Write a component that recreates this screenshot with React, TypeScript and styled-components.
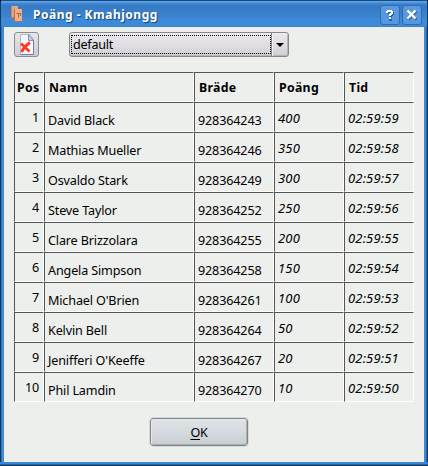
import React from "react";
import styled, { createGlobalStyle } from "styled-components";

const Global = createGlobalStyle`
  * { box-sizing: border-box; }
  body { margin: 0; background: #000; overflow: hidden; }
`;

const Window = styled.div`
  width: 428px;
  height: 466px;
  display: flex;
  flex-direction: column;
  font-family: "Noto Sans", sans-serif;
  font-size: 13px;
  color: #000;
  background: linear-gradient(90deg, #143c62 0 1px, #2c6eb0 1px 2px, #4493e2 2px 3px, #3c86d2 3px 425px, #3f8ad9 425px 426px, #2765a5 426px 427px, #123a60 427px);
  border-radius: 3px 3px 0 0;
  overflow: hidden;
`;

const TitleBar = styled.header`
  height: 27px;
  flex: none;
  margin: 0 1px;
  display: flex;
  align-items: center;
  padding: 2px 5px 0 10px;
  background: linear-gradient(#1a4a7a 0 1px, #5ca3ec 1px 2px, #4389d5 3px, #367bc4 6px, #3c82ce 17px, #3d8ad9 18px 26px, #3a83cf 26px);

  & > svg { flex: none; margin-top: -1px; }
`;

const Title = styled.h1`
  flex: 1;
  margin: 1px 0 0 10px;
  font: bold 12px/16px "Noto Sans", sans-serif;
  letter-spacing: 0.5px;
  color: #fff;
  text-shadow: 1px 1px 1px #174779;
`;

const TitleButton = styled.button`
  width: 20px;
  height: 20px;
  margin-left: 2px;
  padding: 0;
  display: grid;
  place-items: center;
  border: 1px solid #2d6cae;
  border-radius: 3px;
  background: linear-gradient(#5b9ade, #5797df);
`;

const Body = styled.main`
  flex: 1;
  margin: 0 4px;
  padding: 5px 10px 0;
  background: #edefec;
`;

const Toolbar = styled.div`
  height: 25px;
  display: flex;
  gap: 30px;
`;

const ToolButton = styled.button`
  width: 25px;
  height: 25px;
  padding: 0;
  display: grid;
  place-items: center;
  border: 1px solid #8a8d90;
  border-radius: 3px;
  background: linear-gradient(#e8e8ea, #cdced1);
`;

const Combo = styled.div`
  width: 220px;
  height: 25px;
  display: flex;
  border: 1px solid #85878a;
  border-radius: 3px;
  background: linear-gradient(#e9e7eb, #e1dfe3 50%, #cfced2);
  box-shadow: inset 0 1px #f1eff2, inset -1px -1px #b7b5ba;
`;

const ComboValue = styled.div`
  width: 200px;
  margin: 2px 0 2px 1px;
  padding-left: 1px;
  border: 1px dotted #000;
  font-size: 12.6px;
  letter-spacing: -0.25px;
  line-height: 18px;
`;

const ComboArrow = styled.div`
  width: 17px;
  display: grid;
  place-items: center;
  border-left: 1px solid #88868b;
  box-shadow: inset 1px 0 #f2f0f3;
`;

const Table = styled.table`
  width: 400px;
  margin-top: 15px;
  table-layout: fixed;
  border-collapse: separate;
  border-spacing: 0;
`;

const HeaderCell = styled.th<{ $w: number; $indent: number }>`
  width: ${(p) => p.$w}px;
  height: 30px;
  padding: 2px 0 0 ${(p) => p.$indent}px;
  border: 1px solid #fff;
  border-top-color: #555;
  border-left-color: #555;
  font-size: 12.3px;
  line-height: 26px;
  text-align: left;
  letter-spacing: 0.3px;
`;

const cellPadding = {
  rank: "3px 4px 0 0",
  plain: "8px 0 0 3px",
  italic: "3px 0 0 3px",
};

const Cell = styled.td<{ $kind: "rank" | "plain" | "italic" }>`
  height: 30px;
  padding: ${(p) => cellPadding[p.$kind]};
  border: 1px solid #fff;
  border-top-color: #555;
  border-left-color: #555;
  font-size: ${(p) => (p.$kind === "italic" ? 13 : 12.6)}px;
  font-style: ${(p) => (p.$kind === "italic" ? "italic" : "normal")};
  letter-spacing: ${(p) => (p.$kind === "italic" ? 0.15 : -0.15)}px;
  text-align: ${(p) => (p.$kind === "rank" ? "right" : "left")};
  vertical-align: top;
  line-height: ${(p) => (p.$kind === "plain" ? 20 : 24)}px;
  white-space: nowrap;
`;

const OkButton = styled.button`
  display: block;
  width: 98px;
  height: 28px;
  margin: 16px 0 0 136px;
  padding: 0;
  border: 1px solid #818588;
  border-radius: 3px;
  outline: 1px solid #d7dad9;
  outline-offset: 0;
  background: linear-gradient(#dfe4e7, #d4dadd 50%, #c8cdd0);
  box-shadow: inset -1px -1px #a9afb2, inset 1px 1px #e5eaec;
  font: 12.6px/25px "Noto Sans", sans-serif;
  letter-spacing: -0.3px;
  color: #000;
`;

const Mnemonic = styled.span`
  text-decoration: underline;
  text-underline-offset: 2px;
`;

const columns = [
  { name: "Pos", width: 30, indent: 2 },
  { name: "Namn", width: 150, indent: 4 },
  { name: "Bräde", width: 80, indent: 4 },
  { name: "Poäng", width: 70, indent: 4 },
  { name: "Tid", width: 70, indent: 4 },
];

const scores = [
  ["David Black", "928364243", "400", "02:59:59"],
  ["Mathias Mueller", "928364246", "350", "02:59:58"],
  ["Osvaldo Stark", "928364249", "300", "02:59:57"],
  ["Steve Taylor", "928364252", "250", "02:59:56"],
  ["Clare Brizzolara", "928364255", "200", "02:59:55"],
  ["Angela Simpson", "928364258", "150", "02:59:54"],
  ["Michael O'Brien", "928364261", "100", "02:59:53"],
  ["Kelvin Bell", "928364264", "50", "02:59:52"],
  ["Jenifferi O'Keeffe", "928364267", "20", "02:59:51"],
  ["Phil Lamdin", "928364270", "10", "02:59:50"],
];

const TilesIcon = () => (
  <svg width="12" height="16" viewBox="0 0 12 16">
    <path d="M0 0h7v12H0z" fill="#c98463" />
    <path d="M1 0h6v11H1z" fill="#e6a681" />
    <path d="M3 3h8v13H3z" fill="#b8704c" />
    <path d="M4 3h7v12H4z" fill="#efb18c" />
    <path d="M5.500 7.500h4M7.500 7.500v4M9.500 7v3" stroke="#9a6a55" fill="none" />
  </svg>
);

const HelpIcon = () => (
  <svg width="10" height="12" viewBox="0 0 10 12">
    <path d="M1 1h6v1h1v3H7v1H6v2H3V5h1V4h1V3H3v1H1zM3 9h3v2H3z" transform="translate(1 1)" fill="#28629f" />
    <path d="M2 1h5v1h1v3H7v1H6v1H4V5h1V4h1V3H3v1H1V2h1zM4 8h2v2H4z" fill="#fff" />
  </svg>
);

const CloseIcon = () => (
  <svg width="12" height="12" viewBox="0 0 12 12" fill="none" strokeWidth="2.4">
    <path d="M2.5 2.5l8 8m0-8l-8 8" stroke="#28629f" />
    <path d="M1.5 1.5l8 8m0-8l-8 8" stroke="#fff" />
  </svg>
);

const ResetIcon = () => (
  <svg width="19" height="21" viewBox="0 0 19 21">
    <path d="M3.500 .5h9l4 5v15h-13z" fill="#f5f7ff" stroke="#b3b8cf" />
    <path d="M16.500 6v14.500h-13" fill="none" stroke="#767d9c" />
    <path d="M11.500 .5v6h5z" fill="#c5cbe4" stroke="#8a91b2" />
    <path d="M4 9.500l8.500 8M13 8.500Q7.500 12 4.500 18" fill="none" stroke="#ff3a20" strokeWidth="2.800" />
  </svg>
);

export default function App() {
  return (
    <>
      <Global />
      <Window>
        <TitleBar>
          <TilesIcon />
          <Title>Poäng - Kmahjongg</Title>
          <TitleButton aria-label="Help"><HelpIcon /></TitleButton>
          <TitleButton aria-label="Close"><CloseIcon /></TitleButton>
        </TitleBar>
        <Body>
          <Toolbar>
            <ToolButton aria-label="Reset"><ResetIcon /></ToolButton>
            <Combo>
              <ComboValue>default</ComboValue>
              <ComboArrow>
                <svg width="8" height="4" viewBox="0 0 8 4"><path d="M0 0h8L4 4z" /></svg>
              </ComboArrow>
            </Combo>
          </Toolbar>
          <Table>
            <thead>
              <tr>
                {columns.map((c) => (
                  <HeaderCell key={c.name} $w={c.width} $indent={c.indent}>{c.name}</HeaderCell>
                ))}
              </tr>
            </thead>
            <tbody>
              {scores.map(([name, board, points, time], i) => (
                <tr key={name}>
                  <Cell $kind="rank">{i + 1}</Cell>
                  <Cell $kind="plain">{name}</Cell>
                  <Cell $kind="plain">{board}</Cell>
                  <Cell $kind="italic">{points}</Cell>
                  <Cell $kind="italic">{time}</Cell>
                </tr>
              ))}
            </tbody>
          </Table>
          <OkButton><Mnemonic>O</Mnemonic>K</OkButton>
        </Body>
        <Footer />
      </Window>
    </>
  );
}

const Footer = styled.footer`
  height: 4px;
  flex: none;
  background: linear-gradient(#3c87d6 0 2px, #2764a2 2px 3px, #143c62 3px);
`;
